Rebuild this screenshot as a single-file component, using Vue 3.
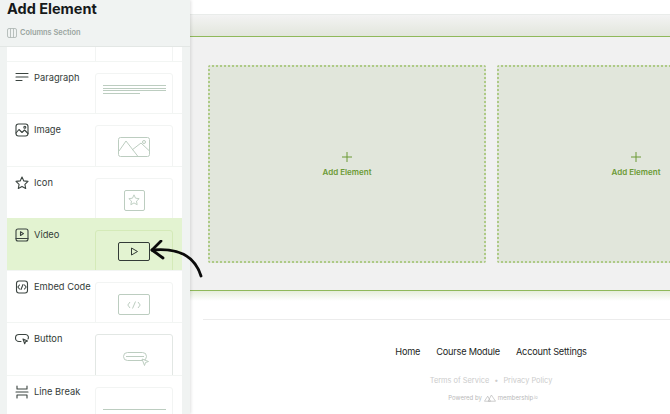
<template>
  <div class="page">
    <aside class="sidebar">
      <header class="sidebar__head">
        <h1>Add Element</h1>
        <p>
          <svg width="10" height="10" viewBox="0 0 10 10" fill="none" stroke="#a9b3ae" stroke-width="0.8">
            <rect x="0.5" y="0.5" width="9" height="9" rx="1.5" />
            <path d="M3.5 0.5v9M6.5 0.5v9" />
          </svg>
          Columns Section
        </p>
      </header>
      <div class="list">
        <div class="row row--stub"><div class="card"></div></div>
        <div
          v-for="item in items"
          :key="item.id"
          class="row"
          :class="{ 'row--active': item.id === 'video' }"
        >
          <svg class="row__icon" width="14" height="14" viewBox="0 0 14 14" fill="none" stroke="#3b4440" stroke-width="1.100" stroke-linecap="round" stroke-linejoin="round">
            <path v-if="item.id === 'paragraph'" d="M1 2.500h12M1 6h12M1 9.500h6" />
            <template v-else-if="item.id === 'image'">
              <rect x="1" y="1" width="12" height="12" rx="2.500" />
              <path d="M1 10l3-3.500 3 3 2.500-2.500L13 10.500" />
              <circle cx="9.800" cy="4.200" r="1" />
            </template>
            <path v-else-if="item.id === 'icon'" d="M7 1l1.800 3.900 4.200.5-3.100 2.900.8 4.200L7 10.400l-3.700 2.100.8-4.200L1 5.400l4.200-.5z" />
            <template v-else-if="item.id === 'video'">
              <rect x="1" y="1" width="12" height="12" rx="2" />
              <path d="M1 10.500h12M5.500 3.700v3.800l3-1.900z" />
            </template>
            <template v-else-if="item.id === 'embed'">
              <rect x="1.500" y="1" width="11" height="12" rx="2.500" />
              <path d="M4.500 5L2.800 7l1.700 2M9.500 5l1.700 2-1.700 2M8 4.500L6 9.500" />
            </template>
            <template v-else-if="item.id === 'button'">
              <path d="M6 9.500H4a3 3 0 0 1 0-7h6.500a3 3 0 0 1 2.500 4.500" />
              <path d="M8 7l4.500 2-2 .8-.8 2z" />
            </template>
            <path v-else d="M2 1v3h10V1M2 13v-3h10v3M1 7h12" />
          </svg>
          <span class="row__label">{{ item.label }}</span>
          <div class="card" :class="{ 'card--strong': item.id === 'button' }">
            <div v-if="item.id === 'paragraph'" class="lines">
              <i></i><i></i><i></i><i class="short"></i>
            </div>
            <svg v-else-if="item.id === 'image'" class="pic" width="32" height="20" viewBox="0 0 32 20" fill="none" stroke="#bccdc0" stroke-width="1">
              <rect x="0.500" y="0.500" width="31" height="19" rx="2" />
              <path d="M1 14l7-10 12 15.500M14 13l9-7 8.500 8" />
              <circle cx="26" cy="5" r="1.500" />
            </svg>
            <div v-else-if="item.id === 'icon'" class="pic pic--star">
              <svg width="12" height="12" viewBox="0 0 14 14" fill="none" stroke="#bccdc0" stroke-width="1.100" stroke-linejoin="round">
                <path d="M7 1l1.800 3.900 4.200.5-3.100 2.900.8 4.200L7 10.400l-3.700 2.100.8-4.200L1 5.400l4.200-.5z" />
              </svg>
            </div>
            <div v-else-if="item.id === 'video'" class="pic pic--video">
              <svg width="9" height="9" viewBox="0 0 9 9" fill="none" stroke="#333b37" stroke-width="1" stroke-linejoin="round">
                <path d="M1.500 1v7l6-3.500z" />
              </svg>
            </div>
            <div v-else-if="item.id === 'embed'" class="pic pic--embed">
              <svg width="14" height="8" viewBox="0 0 14 8" fill="none" stroke="#bccdc0" stroke-width="1">
                <path d="M3 1L0.800 4 3 7M11 1l2.200 3L11 7M8.500.5l-3 7" />
              </svg>
            </div>
            <svg v-else-if="item.id === 'button'" class="pic pic--button" width="26" height="14" viewBox="0 0 26 14" fill="none" stroke="#bccdc0" stroke-width="1" stroke-linejoin="round">
              <rect x="0.500" y="0.500" width="23" height="8" rx="4" />
              <path d="M3 4.500h18" />
              <path d="M19 7l6.500 2.500-3 1-1 3z" fill="#fff" />
            </svg>
            <div v-else class="break"></div>
          </div>
        </div>
      </div>
    </aside>

    <main class="main">
      <div class="main__top"></div>
      <section class="section">
        <div v-for="n in 2" :key="n" class="slot">
          <svg width="12" height="12" viewBox="0 0 12 12" stroke="#6b9a35" stroke-width="1">
            <path d="M6 1v10M1 6h10" />
          </svg>
          <span>Add Element</span>
        </div>
      </section>
      <div class="main__glow"></div>
      <footer class="footer">
        <nav class="footer__nav">
          <a>Home</a>
          <a>Course Module</a>
          <a>Account Settings</a>
        </nav>
        <p class="footer__legal">Terms of Service<b>•</b>Privacy Policy</p>
        <p class="footer__brand">
          Powered by
          <svg width="12" height="8" viewBox="0 0 13 8" fill="none" stroke="#b5b5b5" stroke-width="0.700">
            <path d="M0.500 7.500L4 2l3 5.500zM4.500 7.500L8 .8l4.500 6.700z" />
          </svg>
          membership<small>.io</small>
        </p>
      </footer>
    </main>

    <svg class="arrow" width="60" height="50" viewBox="0 0 60 50" fill="none" stroke="#0b0b0b" stroke-width="2.800" stroke-linecap="round" stroke-linejoin="round">
      <path d="M52 36C47 20 34 7 3 10" />
      <path d="M12 1L3 10l11 8" />
    </svg>
  </div>
</template>

<script setup>
const items = [
  { id: 'paragraph', label: 'Paragraph' },
  { id: 'image', label: 'Image' },
  { id: 'icon', label: 'Icon' },
  { id: 'video', label: 'Video' },
  { id: 'embed', label: 'Embed Code' },
  { id: 'button', label: 'Button' },
  { id: 'break', label: 'Line Break' },
]
</script>

<style>
html,
body {
  margin: 0;
  background: #fff;
}
</style>

<style scoped>
.page {
  position: relative;
  display: flex;
  width: 670px;
  height: 414px;
  overflow: hidden;
  font-family: Inter, "Liberation Sans", sans-serif;
  color: #2c3330;
}

.sidebar {
  flex: 0 0 190px;
  display: flex;
  flex-direction: column;
  background: #f0f3f2;
  box-shadow: 1px 0 3px rgba(0, 0, 0, 0.12);
  z-index: 1;
}

.sidebar__head {
  height: 47px;
  box-sizing: border-box;
  padding: 0 7px;
  border-bottom: 1px solid #e3e7e5;
}

.sidebar__head h1 {
  margin: 0;
  font-size: 14.500px;
  line-height: 17px;
  font-weight: 700;
  color: #16191a;
}

.sidebar__head p {
  display: flex;
  align-items: center;
  gap: 3px;
  margin: 11px 0 0;
  font-size: 7.400px;
  line-height: 10px;
  font-weight: 600;
  color: #9aa5a0;
}

.list {
  flex: 1;
  width: 175px;
  margin-left: 7px;
  overflow: hidden;
}

.row {
  position: relative;
  display: flex;
  box-sizing: border-box;
  height: 52.300px;
  padding: 11px 9px 0 8px;
  overflow: hidden;
  background: #fff;
  border-top: 1px solid #f2f5f3;
}

.row--stub {
  height: 14px;
  padding-top: 0;
  border-top: 0;
  justify-content: flex-end;
}

.row--active {
  background: #e3f3d1;
  border-top-color: #e3f3d1;
}

.row__icon {
  flex: none;
  margin-top: -2px;
}

.row__label {
  flex: 1;
  margin-top: -1px;
  margin-left: 5px;
  font-size: 9.300px;
  line-height: 11px;
  color: #343c38;
  white-space: nowrap;
}

.card {
  flex: none;
  display: flex;
  justify-content: center;
  box-sizing: border-box;
  width: 78px;
  height: 80px;
  padding-top: 11px;
  border: 1px solid #f2f4f3;
  border-radius: 3px;
  background: #fff;
}

.card--strong {
  border-color: #e2e7e4;
}

.row--stub .card {
  border-top: 0;
  border-radius: 0;
}

.row--active .card {
  border-color: #d4eab8;
  background: #e3f3d1;
}

.lines {
  display: flex;
  flex-direction: column;
  gap: 1.500px;
  width: 63px;
}

.lines i {
  display: block;
  height: 1px;
  background: #bccdc0;
}

.lines .short {
  width: 37px;
}

.pic {
  flex: none;
}

.pic--star,
.pic--embed,
.pic--video {
  display: flex;
  align-items: center;
  justify-content: center;
  box-sizing: border-box;
  border: 1px solid #bccdc0;
  border-radius: 2px;
}

.pic--star {
  width: 21px;
  height: 21px;
}

.pic--embed {
  width: 32px;
  height: 21px;
}

.pic--video {
  width: 32px;
  height: 19px;
  border-color: #333b37;
}

.pic--button {
  margin: 6px 0 0 3px;
}

.break {
  width: 63px;
  height: 1px;
  margin-top: 10px;
  background: #bccdc0;
}

.main {
  flex: 1;
  min-width: 0;
  display: flex;
  flex-direction: column;
}

.main__top {
  height: 21px;
  margin-top: 14px;
  border-top: 1px solid #e9ecea;
  background: linear-gradient(#f3f3f3, #e2e6dc);
  border-bottom: 1px solid #8fb95a;
}

.section {
  display: flex;
  gap: 11px;
  box-sizing: border-box;
  height: 254px;
  padding: 28px 0 0 18px;
  overflow: hidden;
  background: #f1f1f1;
  border-bottom: 1px solid #8fb95a;
}

.slot {
  flex: 0 0 278px;
  display: flex;
  flex-direction: column;
  align-items: center;
  box-sizing: border-box;
  height: 198px;
  padding-top: 84px;
  border: 2px dotted #aeca86;
  border-radius: 2px;
  background: #e1e6db;
}

.slot span {
  margin-top: 4px;
  font-size: 8px;
  line-height: 10px;
  font-weight: 600;
  color: #6b9a35;
}

.main__glow {
  height: 10px;
  background: linear-gradient(#e6eedb, #fff);
}

.footer {
  width: 576px;
  margin: 18px 0 0 13px;
  border-top: 1px solid #ececec;
  text-align: center;
}

.footer__nav {
  display: flex;
  justify-content: center;
  gap: 16px;
  padding-top: 25px;
  font-size: 9.200px;
  line-height: 13px;
  letter-spacing: -0.2px;
  color: #1d1f1e;
}

.footer__legal {
  margin: 18px 0 0;
  font-size: 7.400px;
  line-height: 10px;
  color: #cccccc;
}

.footer__legal b {
  margin: 0 5px;
  font-weight: 400;
}

.footer__brand {
  display: flex;
  align-items: center;
  justify-content: center;
  gap: 2px;
  margin: 8px 0 0;
  padding-left: 4px;
  font-size: 6px;
  line-height: 8px;
  color: #b9b9b9;
}

.footer__brand small {
  margin-left: -2px;
  font-size: 4px;
}

.arrow {
  position: absolute;
  left: 149px;
  top: 240px;
  z-index: 2;
}
</style>
